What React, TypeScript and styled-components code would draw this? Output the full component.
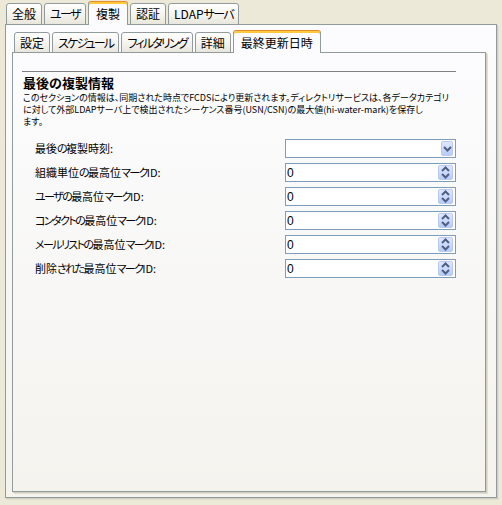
import React from 'react';
import styled, { createGlobalStyle } from 'styled-components';

const GlobalStyle = createGlobalStyle`
  html, body {
    margin: 0;
    padding: 0;
    background: #ece9d8;
  }
  body {
    font-family: "Noto Sans CJK JP", "DejaVu Sans", sans-serif;
    color: #000;
  }
`;

const outerTabs = ['全般', 'ユーザ', '複製', '認証', 'LDAPサーバ'];
const innerTabs = ['設定', 'スケジュール', 'フィルタリング', '詳細', '最終更新日時'];

const fields = [
  { label: '最後の複製時刻:', kind: 'select' },
  { label: '組織単位の最高位マークID:', kind: 'spin' },
  { label: 'ユーザの最高位マークID:', kind: 'spin' },
  { label: 'コンタクトの最高位マークID:', kind: 'spin' },
  { label: 'メールリストの最高位マークID:', kind: 'spin' },
  { label: '削除された最高位マークID:', kind: 'spin' }
];

// the original UI font has narrow kana, so kana runs get tighter spacing
const tighten = (text: string, squeeze: number) =>
  text.split(/([\u3040-\u30ff]+)/).map((part, i) =>
    /[\u3040-\u30ff]/.test(part) ? (
      <Kana key={i} $squeeze={squeeze}>
        {part}
      </Kana>
    ) : (
      part
    )
  );

const ArrowDown = () => (
  <svg width="9" height="6" viewBox="0 0 9 6">
    <path d="M1 1 L4.5 4.5 L8 1" fill="none" stroke="#4d6185" strokeWidth="2" />
  </svg>
);

const ArrowUpDown = () => (
  <svg width="9" height="13" viewBox="0 0 9 13">
    <path d="M1 5 L4.5 1.5 L8 5" fill="none" stroke="#4d6185" strokeWidth="2" />
    <path d="M1 8 L4.5 11.5 L8 8" fill="none" stroke="#4d6185" strokeWidth="2" />
  </svg>
);

const App = () => {
  return (
    <Window>
      <GlobalStyle />
      <TabStrip $indent={1}>
        {outerTabs.map((t) => (
          <Tab key={t} $selected={t === '複製'} $h={22}>
            {tighten(t, 1.6)}
          </Tab>
        ))}
      </TabStrip>
      <OuterPanel>
        <TabStrip $indent={2}>
          {innerTabs.map((t) => (
            <Tab key={t} $selected={t === '最終更新日時'} $h={21}>
              {tighten(t, 1.8)}
            </Tab>
          ))}
        </TabStrip>
        <InnerPanel>
          <Section>
            <Heading>最後の複製情報</Heading>
            <Description>
              <span>このセクションの情報は、同期された時点でFCDSにより更新されます。ディレクトリサービスは、各データカテゴリ</span>
              <span>に対して外部LDAPサーバ上で検出されたシーケンス番号(USN/CSN)の最大値(hi-water-mark)を保存し</span>
              <span>ます。</span>
            </Description>
            <Form>
              {fields.map((f) => (
                <Row key={f.label}>
                  <Label>{tighten(f.label, 1.6)}</Label>
                  <Field>
                    <FieldText>{f.kind === 'spin' ? '0' : ''}</FieldText>
                    {f.kind === 'spin' ? (
                      <SpinButton>
                        <ArrowUpDown />
                      </SpinButton>
                    ) : (
                      <DropButton>
                        <ArrowDown />
                      </DropButton>
                    )}
                  </Field>
                </Row>
              ))}
            </Form>
          </Section>
        </InnerPanel>
      </OuterPanel>
    </Window>
  );
};

export default App;

const Window = styled.div`
  width: 502px;
  height: 505px;
  box-sizing: border-box;
  padding: 1px 5px 7px 5px;
  display: flex;
  flex-direction: column;
  background: #ece9d8;
  overflow: hidden;
`;

const Kana = styled.span<{ $squeeze: number }>`
  letter-spacing: -${(p) => p.$squeeze}px;
`;

const TabStrip = styled.div<{ $indent: number }>`
  display: flex;
  align-items: flex-end;
  gap: 2px;
  padding-left: ${(p) => p.$indent}px;
  position: relative;
  z-index: 2;
  margin-bottom: -1px;
`;

// $h is the height of an unselected tab; the selected one rises 2px above it
const Tab = styled.div<{ $selected: boolean; $h: number }>`
  box-sizing: border-box;
  height: ${(p) => (p.$selected ? p.$h + 2 : p.$h)}px;
  padding: 0 ${(p) => (p.$selected ? 7 : 5)}px;
  padding-top: ${(p) => (p.$selected ? 1 : 0)}px;
  display: flex;
  align-items: center;
  font-size: 12px;
  line-height: 1;
  font-feature-settings: "palt";
  border: 1px solid #919b9c;
  border-bottom: ${(p) => (p.$selected ? 'none' : '1px solid #919b9c')};
  border-top-color: ${(p) => (p.$selected ? '#e68b2c' : '#919b9c')};
  border-radius: 3px 3px 0 0;
  background: ${(p) =>
    p.$selected ? '#fcfcfe' : 'linear-gradient(#ffffff, #f3f2ec 60%, #e8e6dc)'};
  box-shadow: ${(p) => (p.$selected ? 'inset 0 2px 0 #ffc83c' : 'none')};
  white-space: nowrap;
`;

const OuterPanel = styled.div`
  flex: 1;
  display: flex;
  flex-direction: column;
  border: 1px solid #919b9c;
  background: linear-gradient(#fcfcfe, #f4f3ee);
  box-shadow: 1px 1px 0 #d0cdbf, 2px 2px 0 #e3e0d0;
  padding: 5px 10px 5px 6px;
`;

const InnerPanel = styled.div`
  flex: 1;
  border: 1px solid #919b9c;
  background: linear-gradient(#fcfcfe, #f4f3ee);
  box-shadow: 1px 1px 0 #d0cdbf, 2px 2px 0 #e3e0d0;
  padding: 18px 29px 0 9px;
`;

const Section = styled.div`
  border-top: 1px solid #808080;
  padding-top: 4px;
`;

const Heading = styled.div`
  font-size: 13px;
  font-weight: bold;
  line-height: 14px;
  margin-left: 1px;
`;

const Description = styled.div`
  display: flex;
  flex-direction: column;
  font-size: 9px;
  line-height: 12px;
  margin-top: 2px;
  margin-left: 1px;
  font-feature-settings: "palt";
  white-space: nowrap;
`;

const Form = styled.div`
  display: flex;
  flex-direction: column;
  margin-top: 11px;
`;

const Row = styled.div`
  height: 24px;
  display: grid;
  grid-template-columns: 1fr 171px;
  align-items: start;
`;

const Label = styled.div`
  font-size: 11px;
  line-height: 18px;
  padding-left: 13px;
  white-space: nowrap;
  font-feature-settings: "palt";
`;

const Field = styled.div`
  box-sizing: border-box;
  height: 19px;
  border: 1px solid #7f9db9;
  background: #fff;
  display: flex;
  align-items: center;
  padding: 0 2px 0 1px;
`;

const FieldText = styled.span`
  flex: 1;
  font-family: "Liberation Sans", sans-serif;
  font-size: 12px;
`;

const SpinButton = styled.div`
  box-sizing: border-box;
  width: 15px;
  height: 15px;
  display: flex;
  align-items: center;
  justify-content: center;
  border: 1px solid #b9c9ef;
  border-radius: 2px;
  background: linear-gradient(#dfe8fe, #b8cbf7);
`;

const DropButton = styled(SpinButton)`
  width: 12px;
`;
